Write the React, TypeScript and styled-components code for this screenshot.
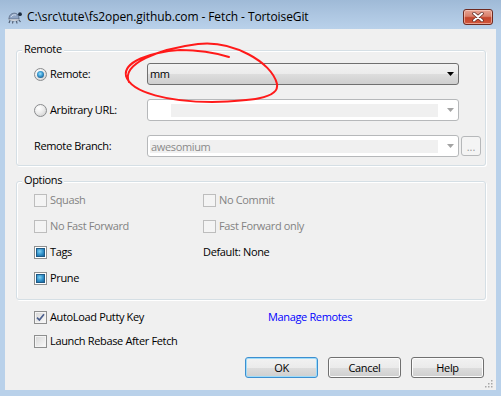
import React from "react";
import styled, { createGlobalStyle } from "styled-components";

const Global = createGlobalStyle`
  html, body { margin: 0; padding: 0; background: #fff; }
  body {
    font-family: "Open Sans", "Noto Sans", sans-serif;
    font-size: 11px;
    letter-spacing: -0.35px;
    color: #000;
  }
  * { box-sizing: border-box; }
`;

const Window = styled.div`
  position: relative;
  width: 501px;
  height: 396px;
  background: #b9d1ea;
  display: flex;
  flex-direction: column;
  overflow: hidden;
`;

const TitleBar = styled.div`
  height: 29px;
  flex: none;
  display: flex;
  align-items: center;
  padding: 4px 8px 0 7px;
  background: linear-gradient(to bottom, #9fbad7 0%, #adc6e1 50%, #b9d1ea 100%);
`;

const TitleIcon = styled.svg`
  width: 16px;
  height: 16px;
  flex: none;
`;

const TitleText = styled.span`
  margin-left: 4px;
  font-size: 12px;
  letter-spacing: -0.1px;
  line-height: 16px;
  color: #000;
  white-space: nowrap;
`;

const CloseButton = styled.div`
  margin-left: auto;
  width: 30px;
  height: 16px;
  margin-top: 1px;
  border: 1px solid #6e2a20;
  border-radius: 3px;
  background: linear-gradient(to bottom, #e8a493 0%, #d9806b 45%, #c4452b 55%, #d2563c 100%);
  box-shadow: inset 0 0 0 1px rgba(255, 220, 210, 0.55);
  display: flex;
  align-items: center;
  justify-content: center;
`;

const Client = styled.div`
  position: relative;
  flex: 1;
  margin: 0 5px 6px 5px;
  background: #f0f0f0;
  padding: 21px 10px 0 11px;
  display: flex;
  flex-direction: column;
`;

const GroupBox = styled.div<{ $top?: number }>`
  position: relative;
  margin-top: ${(p) => p.$top ?? 0}px;
  border: 1px solid #d5dfe5;
  border-radius: 3px;
  box-shadow: inset 1px 1px 0 #fff, 1px 1px 0 #fff;
`;

const GroupLabel = styled.span`
  position: absolute;
  top: -9px;
  left: 5px;
  padding: 0 2px;
  line-height: 14px;
  background: #f0f0f0;
`;

const RemoteGrid = styled.div`
  display: grid;
  grid-template-columns: 111px 312px 20px;
  column-gap: 2px;
  row-gap: 14px;
  grid-auto-rows: 22px;
  align-items: center;
  padding: 12px 6px 8px 17px;
`;

const OptionGrid = styled.div`
  display: grid;
  grid-template-columns: 169px auto;
  grid-auto-rows: 16px;
  row-gap: 10px;
  align-items: center;
  padding: 10px 17px 13px 17px;
`;

const BottomGrid = styled.div`
  margin-top: 9px;
  display: grid;
  grid-template-columns: 234px auto;
  grid-auto-rows: 16px;
  row-gap: 8px;
  align-items: center;
  padding-left: 18px;
`;

const Choice = styled.label<{ $disabled?: boolean }>`
  display: flex;
  align-items: center;
  gap: 3px;
  white-space: nowrap;
  color: ${(p) => (p.$disabled ? "#838383" : "#000")};
  line-height: 16px;
`;

const PlainLabel = styled.span`
  white-space: nowrap;
  line-height: 16px;
`;

const Radio = styled.span<{ $checked?: boolean }>`
  flex: none;
  width: 13px;
  height: 13px;
  border-radius: 50%;
  border: 1px solid #8a8c8e;
  background: radial-gradient(circle at 35% 30%, #ffffff 0%, #ececec 45%, #c9c9c9 100%);
  display: flex;
  align-items: center;
  justify-content: center;
  &::after {
    content: "";
    display: ${(p) => (p.$checked ? "block" : "none")};
    width: 7px;
    height: 7px;
    border-radius: 50%;
    background: radial-gradient(circle at 45% 40%, #a6e4fb 0%, #3d9fd6 40%, #16588a 80%, #103f66 100%);
  }
`;

type CheckState = "off" | "on" | "mixed";

const Box = styled.span<{ $disabled?: boolean }>`
  flex: none;
  width: 13px;
  height: 13px;
  border: 1px solid ${(p) => (p.$disabled ? "#bdbdbd" : "#8e8f8f")};
  background: ${(p) =>
    p.$disabled ? "#f4f4f4" : "linear-gradient(135deg, #d6d6d6 0%, #ececec 60%, #fbfbfb 100%)"};
  box-shadow: inset 0 0 0 1px #f4f4f4;
  display: flex;
  align-items: center;
  justify-content: center;
`;

const MixedBox = styled(Box)`
  background: #fff;
  box-shadow: none;
`;

const MixedMark = styled.span`
  width: 9px;
  height: 9px;
  border: 1px solid #1f5a86;
  background: radial-gradient(circle at 40% 35%, #7fd0f2 0%, #2f8fc8 55%, #1a6398 100%);
`;

const ComboBox = styled.div<{ $disabled?: boolean }>`
  height: 22px;
  border: 1px solid ${(p) => (p.$disabled ? "#b6b8ba" : "#707070")};
  border-radius: 3px;
  background: ${(p) =>
    p.$disabled
      ? "#ffffff"
      : "linear-gradient(to bottom, #f3f3f3 0%, #ebebeb 50%, #dddddd 50%, #cfcfcf 100%)"};
  display: flex;
  align-items: center;
  padding: 0 4px 0 0;
`;

const ComboText = styled.span`
  flex: 1;
  padding-left: 2px;
  line-height: 14px;
  color: #000;
`;

const ComboField = styled.span<{ $indent: number }>`
  flex: 1;
  height: 13px;
  margin-left: ${(p) => p.$indent}px;
  margin-right: 9px;
  background: #f0f0f0;
  color: #8a8a8a;
  line-height: 13px;
  padding-left: 1px;
  white-space: nowrap;
`;

const Arrow = styled.svg`
  width: 7px;
  height: 4px;
  flex: none;
`;

const SmallButton = styled.div`
  width: 20px;
  height: 20px;
  border: 1px solid #b6b8ba;
  border-radius: 3px;
  background: #f4f4f4;
  color: #9a9a9a;
  display: flex;
  align-items: flex-end;
  justify-content: center;
  padding-bottom: 3px;
  line-height: 10px;
  letter-spacing: 0;
`;

const Link = styled.a`
  color: #0000ff;
  text-decoration: none;
  line-height: 16px;
  white-space: nowrap;
`;

const ButtonRow = styled.div`
  margin-top: 8px;
  display: flex;
  justify-content: flex-end;
  gap: 10px;
  padding-right: 2px;
`;

const Button = styled.div<{ $default?: boolean }>`
  width: 73px;
  height: 21px;
  border: 1px solid ${(p) => (p.$default ? "#3c8fd0" : "#707070")};
  border-radius: 3px;
  background: linear-gradient(to bottom, #f2f2f2 0%, #ebebeb 50%, #dddddd 50%, #cfcfcf 100%);
  box-shadow: inset 0 0 0 1px ${(p) => (p.$default ? "#9fdcf9" : "#fcfcfc")};
  display: flex;
  align-items: center;
  justify-content: center;
  line-height: 14px;
`;

const Grip = styled.svg`
  position: absolute;
  right: 3px;
  bottom: 2px;
  width: 8px;
  height: 8px;
`;

const Annotation = styled.svg`
  position: absolute;
  left: 0;
  top: 0;
  width: 501px;
  height: 396px;
  pointer-events: none;
`;

const DropArrow = ({ disabled }: { disabled?: boolean }) => (
  <Arrow viewBox="0 0 7 4">
    <path d="M0 0 H7 L3.5 4 Z" fill={disabled ? "#a3a3a3" : "#000"} />
  </Arrow>
);

const Check = ({ state, disabled }: { state: CheckState; disabled?: boolean }) => {
  if (state === "mixed")
    return (
      <MixedBox>
        <MixedMark />
      </MixedBox>
    );
  return (
    <Box $disabled={disabled}>
      {state === "on" && (
        <svg width="9" height="9" viewBox="0 0 9 9">
          <path d="M1 4.6 L3.4 7 L8 1.2" fill="none" stroke="#4b5f8e" strokeWidth="1.7" />
        </svg>
      )}
    </Box>
  );
};

const Option = ({
  label,
  state = "off",
  disabled,
}: {
  label: string;
  state?: CheckState;
  disabled?: boolean;
}) => (
  <Choice $disabled={disabled}>
    <Check state={state} disabled={disabled} />
    {label}
  </Choice>
);

export default function App() {
  return (
    <>
      <Global />
      <Window>
        <TitleBar>
          <TitleIcon viewBox="0 0 16 16">
            <ellipse cx="7" cy="10" rx="5.5" ry="2" fill="#f4f6f8" stroke="#7d8a9a" strokeWidth="0.6" />
            <path d="M2 10 C2 5.5 5 4 8 4.2 C10.5 4.4 12 6.5 12 10 Z" fill="#8ea4c4" stroke="#53627a" strokeWidth="0.7" />
            <path d="M4 8 C5 6 7 5.5 9 6" fill="none" stroke="#d4deec" strokeWidth="1" />
            <circle cx="13" cy="5.2" r="1.9" fill="#1c2c40" />
            <path d="M3 11.5 L2 14 M6 12 L5.5 14.5 M9.5 12 L10 14.5 M12 11 L13.5 13" stroke="#4f5d72" strokeWidth="1.2" />
          </TitleIcon>
          <TitleText>C:\src\tute\fs2open.github.com - Fetch - TortoiseGit</TitleText>
          <CloseButton>
            <svg width="12" height="10" viewBox="0 0 12 10">
              <path d="M2 1.5 L10 8.5 M10 1.5 L2 8.5" stroke="#5a2a24" strokeWidth="3.4" strokeLinecap="round" />
              <path d="M2 1.5 L10 8.5 M10 1.5 L2 8.5" stroke="#ffffff" strokeWidth="2" strokeLinecap="round" />
            </svg>
          </CloseButton>
        </TitleBar>
        <Client>
          <GroupBox>
            <GroupLabel>Remote</GroupLabel>
            <RemoteGrid>
              <Choice>
                <Radio $checked />
                Remote:
              </Choice>
              <ComboBox>
                <ComboText>mm</ComboText>
                <DropArrow />
              </ComboBox>
              <span />
              <Choice>
                <Radio />
                Arbitrary URL:
              </Choice>
              <ComboBox $disabled>
                <ComboField $indent={23} />
                <DropArrow disabled />
              </ComboBox>
              <span />
              <PlainLabel>Remote Branch:</PlainLabel>
              <ComboBox $disabled>
                <ComboField $indent={2}>awesomium</ComboField>
                <DropArrow disabled />
              </ComboBox>
              <SmallButton>...</SmallButton>
            </RemoteGrid>
          </GroupBox>
          <GroupBox $top={15}>
            <GroupLabel>Options</GroupLabel>
            <OptionGrid>
              <Option label="Squash" disabled />
              <Option label="No Commit" disabled />
              <Option label="No Fast Forward" disabled />
              <Option label="Fast Forward only" disabled />
              <Option label="Tags" state="mixed" />
              <PlainLabel>Default: None</PlainLabel>
              <Option label="Prune" state="mixed" />
            </OptionGrid>
          </GroupBox>
          <BottomGrid>
            <Option label="AutoLoad Putty Key" state="on" />
            <Link href="#">Manage Remotes</Link>
            <Option label="Launch Rebase After Fetch" />
          </BottomGrid>
          <ButtonRow>
            <Button $default>OK</Button>
            <Button>Cancel</Button>
            <Button>Help</Button>
          </ButtonRow>
          <Grip viewBox="0 0 8 8">
            <g fill="#a7a7a7">
              <rect x="6" y="0" width="1.5" height="1.5" />
              <rect x="3" y="3" width="1.5" height="1.5" />
              <rect x="6" y="3" width="1.5" height="1.5" />
              <rect x="0" y="6" width="1.5" height="1.5" />
              <rect x="3" y="6" width="1.5" height="1.5" />
              <rect x="6" y="6" width="1.5" height="1.5" />
            </g>
          </Grip>
        </Client>
        <Annotation viewBox="0 0 501 396">
          <path
            d="M129 82 C121 64 158 49 198 44 C232 40 272 62 277 84 C280 99 248 101 212 102 C170 102 131 93 126 76 C123 62 150 52 180 50 C200 50 216 53 229 57"
            fill="none"
            stroke="#ff1a1a"
            strokeWidth="2"
            strokeLinecap="round"
          />
        </Annotation>
      </Window>
    </>
  );
}
